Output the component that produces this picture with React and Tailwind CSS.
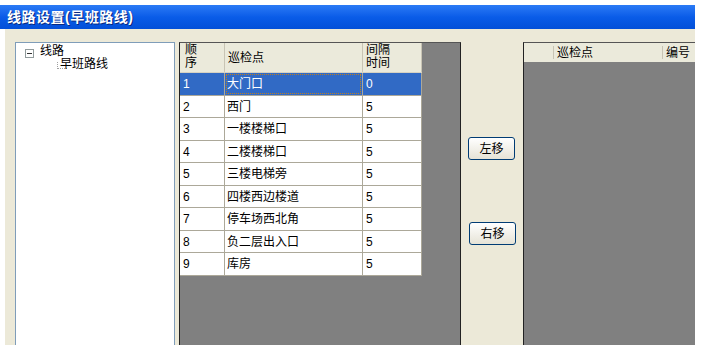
export default function App() {
  const rows = [
    { no: 1, name: '大门口', gap: 0 },
    { no: 2, name: '西门', gap: 5 },
    { no: 3, name: '一楼楼梯口', gap: 5 },
    { no: 4, name: '二楼楼梯口', gap: 5 },
    { no: 5, name: '三楼电梯旁', gap: 5 },
    { no: 6, name: '四楼西边楼道', gap: 5 },
    { no: 7, name: '停车场西北角', gap: 5 },
    { no: 8, name: '负二层出入口', gap: 5 },
    { no: 9, name: '库房', gap: 5 },
  ]

  const font = { fontFamily: '"Liberation Sans", "Noto Sans CJK SC", sans-serif' }

  return (
    <div className="w-[705px] h-[356px] bg-white overflow-hidden text-[12px] text-black" style={font}>
      <div className="mt-[5px] w-[695px]">
        {/* Title bar */}
        <div className="h-[24px] flex items-center pl-[7px] bg-gradient-to-b from-[#2a7af5] via-[#0a5ce8] to-[#0350d8]">
          <span className="text-white font-bold text-[14px] leading-none tracking-[0.5px] [text-shadow:1px_1px_0_#0a2a80]">
            线路设置(早班路线)
          </span>
        </div>

        {/* Body */}
        <div className="ml-[5px] h-[316px] overflow-hidden bg-[#ece9d8] flex items-start pt-[13px] pl-[10px]">
          {/* Tree */}
          <div className="relative w-[160px] h-[310px] bg-white border border-[#7f9db9]">
            <svg className="absolute left-[9px] top-[6px]" width="50" height="24" viewBox="0 0 50 24">
              <rect x="0.5" y="0.5" width="8" height="8" fill="#fff" stroke="#919b9c" />
              <line x1="2" y1="4.5" x2="7" y2="4.5" stroke="#333" />
              <line x1="32.5" y1="13" x2="32.5" y2="20" stroke="#a0a0a0" strokeDasharray="1 1" />
              <line x1="33" y1="19.5" x2="43" y2="19.5" stroke="#a0a0a0" strokeDasharray="1 1" />
            </svg>
            <div className="absolute left-[24px] top-[1px] leading-[14px]">线路</div>
            <div className="absolute left-[44px] top-[14px] leading-[14px]">早班路线</div>
          </div>

          {/* Left grid */}
          <div className="ml-[4px] w-[282px] h-[310px] bg-[#808080] border border-[#222] border-t-[#555]">
            <div className="w-[242px]">
              <div className="flex h-[30px] bg-[#ebeadb] border-b border-[#d6d2c2]">
                <div className="w-[45px] pl-[5px] leading-[13px] pt-[1px] border-r border-[#c8c4b4]">顺<br />序</div>
                <div className="w-[138px] pl-[3px] flex items-center border-r border-[#c8c4b4]">巡检点</div>
                <div className="w-[59px] pl-[3px] leading-[13px] pt-[1px] border-r border-[#c8c4b4]">间隔<br />时间</div>
              </div>
              {rows.map((r, i) => {
                const sel = i === 0
                return (
                  <div
                    key={r.no}
                    className={`flex border-b border-[#aca899] ${i % 2 === 0 ? 'h-[23px]' : 'h-[22px]'} ${sel ? 'bg-[#316ac5] text-white' : 'bg-white'}`}
                  >
                    <div className="w-[45px] pl-[3px] flex items-center border-r border-[#aca899]">{r.no}</div>
                    <div className="w-[138px] flex items-center border-r border-[#aca899]">
                      <div className={`flex-1 h-full flex items-center pl-[2px] ${sel ? 'outline-1 outline-dotted outline-[#c08020] -outline-offset-2' : ''}`}>
                        {r.name}
                      </div>
                    </div>
                    <div className="w-[59px] pl-[3px] flex items-center border-r border-[#aca899]">{r.gap}</div>
                  </div>
                )
              })}
            </div>
          </div>

          {/* Buttons */}
          <div className="w-[62px] flex flex-col items-start pl-[7px] pt-[95px]">
            <button className="w-[47px] h-[23px] rounded-[3px] border border-[#003c74] bg-gradient-to-b from-white to-[#e6e3d6] leading-none">
              左移
            </button>
            <button className="mt-[62px] ml-[1px] w-[47px] h-[23px] rounded-[3px] border border-[#003c74] bg-gradient-to-b from-white to-[#e6e3d6] leading-none">
              右移
            </button>
          </div>

          {/* Right grid */}
          <div className="w-[172px] h-[310px] bg-[#808080] border-l border-t border-[#222] border-t-[#555]">
            <div className="flex h-[19px] bg-[#ebeadb] items-center">
              <div className="w-[30px] h-[13px] border-r border-[#c8c4b4]" />
              <div className="w-[109px] pl-[3px] h-[13px] flex items-center border-r border-[#c8c4b4]">巡检点</div>
              <div className="pl-[3px] h-[13px] flex items-center">编号</div>
            </div>
          </div>
        </div>
      </div>
    </div>
  )
}
